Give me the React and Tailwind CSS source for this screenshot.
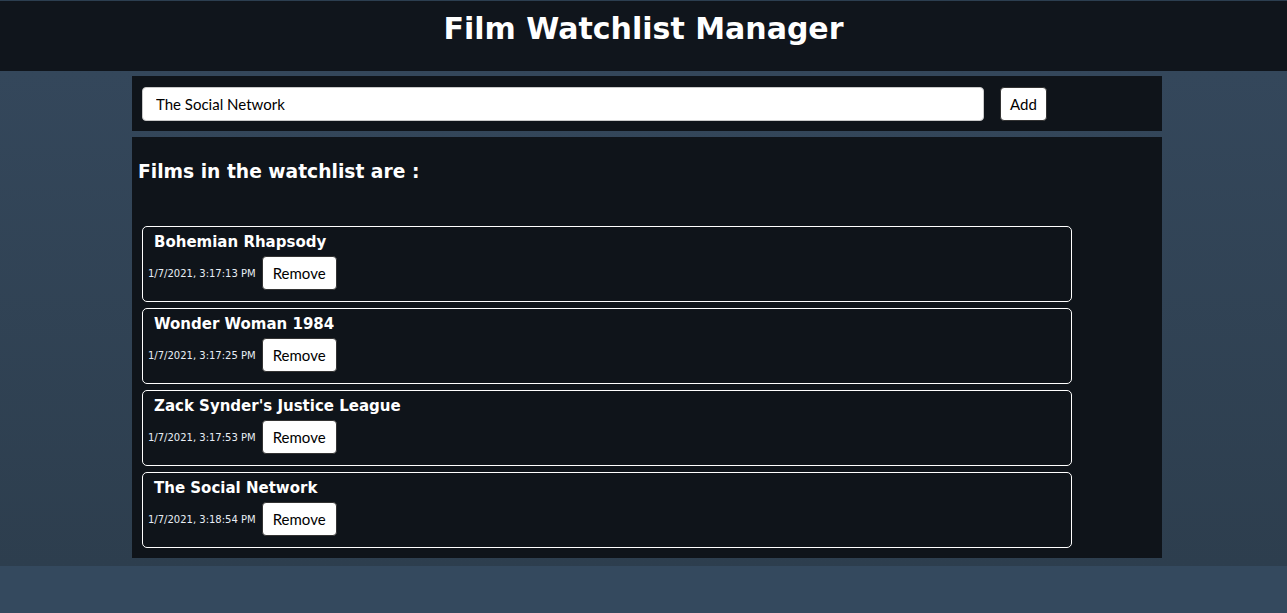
import React, { useState } from 'react';

const initialFilms = [
  { id: 1, title: 'Bohemian Rhapsody', addedAt: '1/7/2021, 3:17:13 PM' },
  { id: 2, title: 'Wonder Woman 1984', addedAt: '1/7/2021, 3:17:25 PM' },
  { id: 3, title: "Zack Synder's Justice League", addedAt: '1/7/2021, 3:17:53 PM' },
  { id: 4, title: 'The Social Network', addedAt: '1/7/2021, 3:18:54 PM' },
];

const dejavu = "font-['DejaVu_Sans',sans-serif]";
const ui = "font-['Lato',sans-serif]";

function App() {
  const [films, setFilms] = useState(initialFilms);
  const [text, setText] = useState('The Social Network');

  const addFilm = () => {
    if (!text.trim()) return;
    setFilms([...films, { id: Date.now(), title: text, addedAt: new Date().toLocaleString() }]);
  };

  return (
    <div className="min-h-[613px] bg-[#34495e]">
      {/* Header */}
      <header className="h-[71px] bg-[#10151c] border-t border-[#2c3e50] flex justify-center">
        <h1 className={`${dejavu} font-bold text-[30px] text-white mt-[9px] leading-[38px]`}>
          Film Watchlist Manager
        </h1>
      </header>

      <main className="bg-gradient-to-b from-[#34475b] to-[#2d3e4e] pt-[5px] pb-[8px]">
        {/* Add form */}
        <div className="w-[1030px] ml-[132px] h-[55px] bg-[#0f141a] flex items-start pt-[11px] pl-[10px]">
          <input
            value={text}
            onChange={(e) => setText(e.target.value)}
            className={`${ui} w-[842px] h-[34px] rounded-[4px] bg-white border border-[#c9c9c9] px-[13px] text-[15px] text-black outline-none`}
          />
          <button
            onClick={addFilm}
            className={`${ui} ml-[16px] w-[47px] h-[34px] rounded-[4px] bg-white border border-[#333] text-[15px] text-black`}
          >
            Add
          </button>
        </div>

        {/* Watchlist */}
        <section className="w-[1030px] ml-[132px] mt-[6px] h-[421px] bg-[#0f141a] pt-[23px]">
          <h2 className={`${dejavu} font-bold text-[18.7px] text-white pl-[6px] leading-[23px]`}>
            Films in the watchlist are :
          </h2>
          <ul className="mt-[43px] pl-[10px] flex flex-col gap-[6px]">
            {films.map((film) => (
              <li
                key={film.id}
                className="w-[930px] h-[76px] border border-white rounded-[5px] pt-[5px] pl-[11px]"
              >
                <div className={`${dejavu} font-bold text-[15px] text-white leading-[20px]`}>{film.title}</div>
                <div className="flex items-center mt-[4px] -ml-[6px]">
                  <span className={`${dejavu} text-[10px] text-[#e8eef5]`}>{film.addedAt}</span>
                  <button
                    onClick={() => setFilms(films.filter((f) => f.id !== film.id))}
                    className={`${ui} ml-[6px] w-[75px] h-[34px] rounded-[4px] bg-white border border-[#333] text-[15px] text-black`}
                  >
                    Remove
                  </button>
                </div>
              </li>
            ))}
          </ul>
        </section>
      </main>
    </div>
  );
}

export default App;
